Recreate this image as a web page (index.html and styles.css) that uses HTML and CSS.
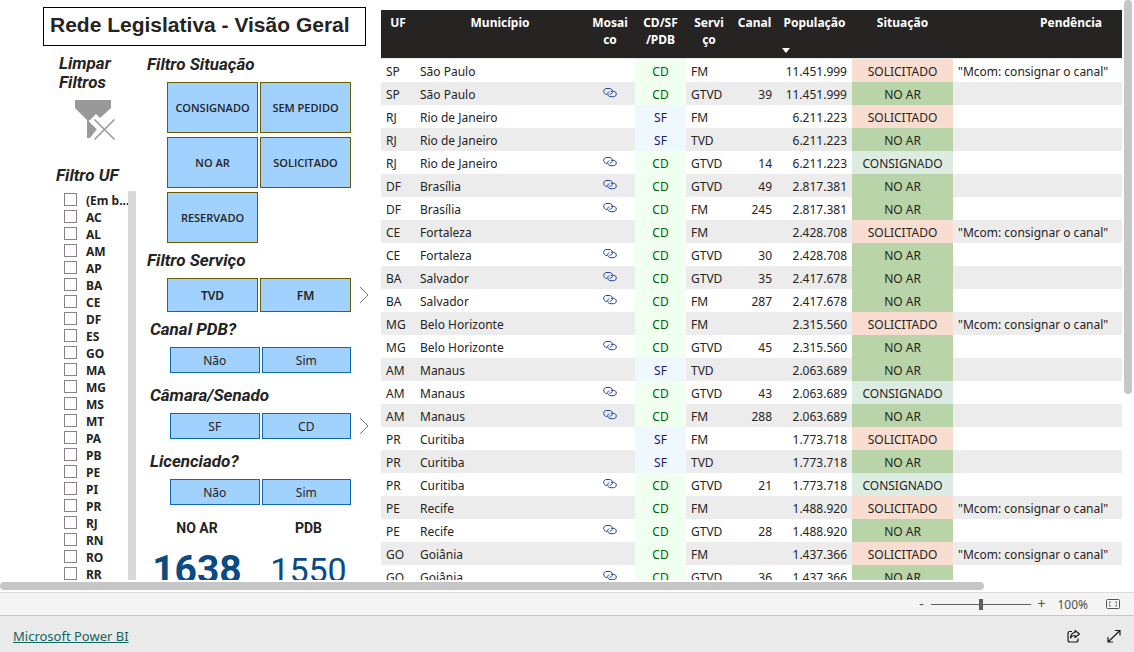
FILE: index.html
```html
<!DOCTYPE html>
<html lang="pt-BR">
<head>
<meta charset="utf-8">
<title>Rede Legislativa - Visão Geral</title>
<link rel="stylesheet" href="styles.css">
</head>
<body>
<svg class="symbols" aria-hidden="true">
  <symbol id="link" viewBox="0 0 14 11">
    <path d="M4 7.500C1.500 7.500 .7 5.500 .7 4.300C.7 2.500 2 1.500 4 1.500H6C8.500 1.500 9.500 3 9.500 4.500C9.500 6.500 8 7.200 6.500 7.200" />
    <path d="M8 4.300H10.500C14.200 4.300 14.200 9.700 10.500 9.700H8C5 9.700 4.500 7.500 4.700 6.500C5 5 6 4.700 6.500 4.700" />
  </symbol>
  <symbol id="chevron" viewBox="0 0 10 18"><path d="M1 1l8 8-8 8" /></symbol>
</svg>
<div class="app">
  <main class="viewport">
    <div class="report">
      <aside class="sidebar">
        <h1 class="title">Rede Legislativa - Visão Geral</h1>
        <div class="panels">
          <section class="uf-panel">
            <h2 class="heading clear-heading">Limpar Filtros</h2>
            <button class="clear" aria-label="Limpar Filtros">
              <svg width="41" height="41" viewBox="0 0 41 41"><path fill="#999" d="M0 0H36V8L25 18L21 14L14 21L22 29L15 38H12V20L0 8z" /><path fill="none" stroke="#fff" stroke-width="1.500" d="M14 20.500L23 29.500" /><path fill="none" stroke="#999" stroke-width="1.600" d="M19.500 19.500l20 20M39.500 19.500L19.500 39.500" /></svg>
            </button>
            <h2 class="heading uf-heading">Filtro UF</h2>
            <div class="uf-box">
              <div class="uf-list">
                <label><input type="checkbox"><span>(Em b...</span></label>
                <label><input type="checkbox"><span>AC</span></label>
                <label><input type="checkbox"><span>AL</span></label>
                <label><input type="checkbox"><span>AM</span></label>
                <label><input type="checkbox"><span>AP</span></label>
                <label><input type="checkbox"><span>BA</span></label>
                <label><input type="checkbox"><span>CE</span></label>
                <label><input type="checkbox"><span>DF</span></label>
                <label><input type="checkbox"><span>ES</span></label>
                <label><input type="checkbox"><span>GO</span></label>
                <label><input type="checkbox"><span>MA</span></label>
                <label><input type="checkbox"><span>MG</span></label>
                <label><input type="checkbox"><span>MS</span></label>
                <label><input type="checkbox"><span>MT</span></label>
                <label><input type="checkbox"><span>PA</span></label>
                <label><input type="checkbox"><span>PB</span></label>
                <label><input type="checkbox"><span>PE</span></label>
                <label><input type="checkbox"><span>PI</span></label>
                <label><input type="checkbox"><span>PR</span></label>
                <label><input type="checkbox"><span>RJ</span></label>
                <label><input type="checkbox"><span>RN</span></label>
                <label><input type="checkbox"><span>RO</span></label>
                <label><input type="checkbox"><span>RR</span></label>
              </div>
              <div class="uf-scroll"></div>
            </div>
          </section>
          <div class="filters">
            <section class="group">
              <h2 class="heading">Filtro Situação</h2>
              <div class="tiles tall">
                <button>CONSIGNADO</button><button>SEM PEDIDO</button>
                <button>NO AR</button><button>SOLICITADO</button>
                <button>RESERVADO</button>
              </div>
            </section>
            <section class="group">
              <h2 class="heading">Filtro Serviço</h2>
              <div class="slicer">
                <div class="tiles mid"><button>TVD</button><button>FM</button></div>
                <button class="next" aria-label="Próximo"><svg width="10" height="18"><use href="#chevron" /></svg></button>
              </div>
            </section>
            <section class="group inset">
              <h2 class="heading">Canal PDB?</h2>
              <div class="tiles small"><button>Não</button><button>Sim</button></div>
            </section>
            <section class="group inset spaced">
              <h2 class="heading">Câmara/Senado</h2>
              <div class="slicer">
                <div class="tiles small"><button>SF</button><button>CD</button></div>
                <button class="next" aria-label="Próximo"><svg width="10" height="18"><use href="#chevron" /></svg></button>
              </div>
            </section>
            <section class="group inset spaced">
              <h2 class="heading">Licenciado?</h2>
              <div class="tiles small"><button>Não</button><button>Sim</button></div>
            </section>
            <div class="cards">
              <div class="card strong"><h3>NO AR</h3><p>1638</p></div>
              <div class="card"><h3>PDB</h3><p>1550</p></div>
            </div>
          </div>
        </div>
      </aside>
      <div class="grid">
        <table>
          <colgroup><col class="w-uf"><col><col class="w-mos"><col class="w-org"><col class="w-ser"><col class="w-can"><col class="w-pop"><col class="w-sit"><col class="w-pen"></colgroup>
          <thead>
            <tr><th>UF</th><th>Município</th><th>Mosai<br>co</th><th>CD/SF<br>/PDB</th><th>Servi<br>ço</th><th>Canal</th><th class="sorted">População</th><th>Situação</th><th class="last">Pendência</th></tr>
          </thead>
          <tbody>
            <tr><td>SP</td><td>São Paulo</td><td></td><td class="cd">CD</td><td>FM</td><td class="n"></td><td class="n">11.451.999</td><td class="sol">SOLICITADO</td><td>"Mcom: consignar o canal"</td></tr>
            <tr><td>SP</td><td>São Paulo</td><td class="m"><a href="#" aria-label="Mosaico"><svg width="14" height="11"><use href="#link" /></svg></a></td><td class="cd">CD</td><td>GTVD</td><td class="n">39</td><td class="n">11.451.999</td><td class="air">NO AR</td><td></td></tr>
            <tr><td>RJ</td><td>Rio de Janeiro</td><td></td><td class="sf">SF</td><td>FM</td><td class="n"></td><td class="n">6.211.223</td><td class="sol">SOLICITADO</td><td></td></tr>
            <tr><td>RJ</td><td>Rio de Janeiro</td><td></td><td class="sf">SF</td><td>TVD</td><td class="n"></td><td class="n">6.211.223</td><td class="air">NO AR</td><td></td></tr>
            <tr><td>RJ</td><td>Rio de Janeiro</td><td class="m"><a href="#" aria-label="Mosaico"><svg width="14" height="11"><use href="#link" /></svg></a></td><td class="cd">CD</td><td>GTVD</td><td class="n">14</td><td class="n">6.211.223</td><td class="con">CONSIGNADO</td><td></td></tr>
            <tr><td>DF</td><td>Brasília</td><td class="m"><a href="#" aria-label="Mosaico"><svg width="14" height="11"><use href="#link" /></svg></a></td><td class="cd">CD</td><td>GTVD</td><td class="n">49</td><td class="n">2.817.381</td><td class="air">NO AR</td><td></td></tr>
            <tr><td>DF</td><td>Brasília</td><td class="m"><a href="#" aria-label="Mosaico"><svg width="14" height="11"><use href="#link" /></svg></a></td><td class="cd">CD</td><td>FM</td><td class="n">245</td><td class="n">2.817.381</td><td class="air">NO AR</td><td></td></tr>
            <tr><td>CE</td><td>Fortaleza</td><td></td><td class="cd">CD</td><td>FM</td><td class="n"></td><td class="n">2.428.708</td><td class="sol">SOLICITADO</td><td>"Mcom: consignar o canal"</td></tr>
            <tr><td>CE</td><td>Fortaleza</td><td class="m"><a href="#" aria-label="Mosaico"><svg width="14" height="11"><use href="#link" /></svg></a></td><td class="cd">CD</td><td>GTVD</td><td class="n">30</td><td class="n">2.428.708</td><td class="air">NO AR</td><td></td></tr>
            <tr><td>BA</td><td>Salvador</td><td class="m"><a href="#" aria-label="Mosaico"><svg width="14" height="11"><use href="#link" /></svg></a></td><td class="cd">CD</td><td>GTVD</td><td class="n">35</td><td class="n">2.417.678</td><td class="air">NO AR</td><td></td></tr>
            <tr><td>BA</td><td>Salvador</td><td class="m"><a href="#" aria-label="Mosaico"><svg width="14" height="11"><use href="#link" /></svg></a></td><td class="cd">CD</td><td>FM</td><td class="n">287</td><td class="n">2.417.678</td><td class="air">NO AR</td><td></td></tr>
            <tr><td>MG</td><td>Belo Horizonte</td><td></td><td class="cd">CD</td><td>FM</td><td class="n"></td><td class="n">2.315.560</td><td class="sol">SOLICITADO</td><td>"Mcom: consignar o canal"</td></tr>
            <tr><td>MG</td><td>Belo Horizonte</td><td class="m"><a href="#" aria-label="Mosaico"><svg width="14" height="11"><use href="#link" /></svg></a></td><td class="cd">CD</td><td>GTVD</td><td class="n">45</td><td class="n">2.315.560</td><td class="air">NO AR</td><td></td></tr>
            <tr><td>AM</td><td>Manaus</td><td></td><td class="sf">SF</td><td>TVD</td><td class="n"></td><td class="n">2.063.689</td><td class="air">NO AR</td><td></td></tr>
            <tr><td>AM</td><td>Manaus</td><td class="m"><a href="#" aria-label="Mosaico"><svg width="14" height="11"><use href="#link" /></svg></a></td><td class="cd">CD</td><td>GTVD</td><td class="n">43</td><td class="n">2.063.689</td><td class="con">CONSIGNADO</td><td></td></tr>
            <tr><td>AM</td><td>Manaus</td><td class="m"><a href="#" aria-label="Mosaico"><svg width="14" height="11"><use href="#link" /></svg></a></td><td class="cd">CD</td><td>FM</td><td class="n">288</td><td class="n">2.063.689</td><td class="air">NO AR</td><td></td></tr>
            <tr><td>PR</td><td>Curitiba</td><td></td><td class="sf">SF</td><td>FM</td><td class="n"></td><td class="n">1.773.718</td><td class="sol">SOLICITADO</td><td></td></tr>
            <tr><td>PR</td><td>Curitiba</td><td></td><td class="sf">SF</td><td>TVD</td><td class="n"></td><td class="n">1.773.718</td><td class="air">NO AR</td><td></td></tr>
            <tr><td>PR</td><td>Curitiba</td><td class="m"><a href="#" aria-label="Mosaico"><svg width="14" height="11"><use href="#link" /></svg></a></td><td class="cd">CD</td><td>GTVD</td><td class="n">21</td><td class="n">1.773.718</td><td class="con">CONSIGNADO</td><td></td></tr>
            <tr><td>PE</td><td>Recife</td><td></td><td class="cd">CD</td><td>FM</td><td class="n"></td><td class="n">1.488.920</td><td class="sol">SOLICITADO</td><td>"Mcom: consignar o canal"</td></tr>
            <tr><td>PE</td><td>Recife</td><td class="m"><a href="#" aria-label="Mosaico"><svg width="14" height="11"><use href="#link" /></svg></a></td><td class="cd">CD</td><td>GTVD</td><td class="n">28</td><td class="n">1.488.920</td><td class="air">NO AR</td><td></td></tr>
            <tr><td>GO</td><td>Goiânia</td><td></td><td class="cd">CD</td><td>FM</td><td class="n"></td><td class="n">1.437.366</td><td class="sol">SOLICITADO</td><td>"Mcom: consignar o canal"</td></tr>
            <tr><td>GO</td><td>Goiânia</td><td class="m"><a href="#" aria-label="Mosaico"><svg width="14" height="11"><use href="#link" /></svg></a></td><td class="cd">CD</td><td>GTVD</td><td class="n">36</td><td class="n">1.437.366</td><td class="air">NO AR</td><td></td></tr>
          </tbody>
        </table>
      </div>
    </div>
    <div class="v-scroll"><div class="v-thumb"></div></div>
  </main>
  <div class="h-scroll"><div class="h-thumb"></div></div>
  <div class="zoombar">
    <button class="step" aria-label="Reduzir">-</button>
    <input type="range" min="0" max="200" value="100" aria-label="Zoom">
    <button class="step plus" aria-label="Ampliar">+</button>
    <span class="percent">100%</span>
    <button class="icon" aria-label="Ajustar à página"><svg width="14" height="12" viewBox="0 0 14 12" fill="none" stroke="#555"><rect x=".5" y="1.500" width="13" height="9" rx="1" /><path d="M3.500 5.500V4H5M9 4h1.500v1.500M3.500 6.500V8H5M9 8h1.500V6.500" stroke-width=".8" /></svg></button>
  </div>
  <footer class="footer">
    <a href="#">Microsoft Power BI</a>
    <div class="actions">
      <button class="icon" aria-label="Compartilhar"><svg width="14" height="14" viewBox="0 0 14 14" fill="none" stroke="#1b1b1b" stroke-width="1.200" stroke-linejoin="round"><path d="M5 2.500H3Q1 2.500 1 4.500V11Q1 13 3 13H9Q11 13 11 11V9.500" /><path d="M8 1.500L12.500 5 8 8.500V6.500Q5 6.300 3.500 9Q3.800 4 8 3.500z" /></svg></button>
      <button class="icon" aria-label="Tela inteira"><svg width="14" height="14" viewBox="0 0 14 14" fill="none" stroke="#1b1b1b" stroke-width="1.200"><path d="M8 1.500h5v5M6 13H1V8M1 13L13 1.500" /></svg></button>
    </div>
  </footer>
</div>
</body>
</html>
```
FILE: styles.css
```css
* { box-sizing: border-box; }
body {
  margin: 0;
  font-family: "Noto Sans", "Open Sans", sans-serif;
  font-size: 12px;
  color: #252423;
  background: #fff;
}
h1, h2, h3, p { margin: 0; }
button {
  font: inherit;
  color: inherit;
  padding: 0;
  border: 0;
  background: none;
}
svg { display: block; }
.symbols { width: 0; height: 0; position: absolute; }

.app { display: flex; flex-direction: column; height: 100vh; }
.viewport { flex: 1; min-height: 0; display: flex; overflow: hidden; }
.report {
  flex: 1;
  min-width: 0;
  display: flex;
  gap: 10px;
  padding: 7px 2px 0 43px;
}

.sidebar { flex: 0 0 328px; }
.title {
  margin-right: 5px;
  height: 39px;
  padding: 0 6px;
  border: 1px solid #000;
  font: bold 21px/34px "Liberation Sans", Arial, sans-serif;
  white-space: nowrap;
}
.panels { display: flex; padding-top: 8px; }
.heading {
  font: italic bold 17px/20px Roboto, sans-serif;
  white-space: nowrap;
}
.uf-panel { flex: 0 0 104px; }
.clear-heading { padding-left: 16px; line-height: 19px; width: 80px; white-space: normal; }
.clear { margin: 8px 0 0 32px; display: block; }
.uf-heading { margin-top: 24px; padding-left: 13px; }
.uf-box { display: flex; width: 93px; margin-top: 6px; }
.uf-list { flex: 1; min-width: 0; padding-left: 21px; }
.uf-list label {
  display: flex;
  align-items: center;
  gap: 9px;
  height: 17px;
  font-weight: bold;
  white-space: nowrap;
}
.uf-list span { padding-top: 1px; }
.uf-list input {
  appearance: none;
  flex: none;
  width: 13px;
  height: 13px;
  margin: 0;
  border: 1px solid #8a8188;
  background: #fff;
}
.uf-scroll { flex: 0 0 8px; background: #d9d9d9; }

.filters { flex: 1; display: flex; flex-direction: column; gap: 7px; }
.inset .heading { padding-left: 3px; }
.spaced { margin-top: 5px; }
.tiles {
  display: grid;
  grid-template-columns: 1fr 1fr;
  gap: 4px 2px;
  width: 184px;
  margin: 8px 0 0 20px;
}
.tiles button {
  height: 26px;
  background: #a0d1ff;
  border: 1px solid #0c68b8;
}
.inset .tiles { width: 181px; margin-left: 23px; }
.tiles.tall button, .tiles.mid button { border-color: #6b5b00; font-weight: 600; }
.tiles.tall button { height: 51px; font-family: "Open Sans", sans-serif; font-size: 11px; }
.tiles.mid button { height: 34px; }
.slicer { display: flex; align-items: flex-end; gap: 8px; }
.next { height: 26px; display: flex; align-items: center; }
.mid + .next { height: 34px; }
.next svg, .m svg { fill: none; stroke: #777; }
.cards { display: flex; margin-top: 6px; }
.card { width: 100px; text-align: center; }
.card + .card { width: 123px; }
.card h3 { font: bold 14px/20px Roboto, sans-serif; }
.card p { font: 34px/40px Roboto, sans-serif; color: #0b4a82; margin-top: 12px; }
.card.strong p { font-size: 39px; font-weight: bold; }

.grid { flex: 1; min-width: 0; padding-top: 3px; }
table {
  width: 100%;
  table-layout: fixed;
  border-collapse: collapse;
}
.w-uf { width: 34px; }
.w-mos { width: 50px; }
.w-org { width: 51px; }
.w-ser { width: 46px; }
.w-can { width: 45px; }
.w-pop { width: 75px; }
.w-sit { width: 101px; }
.w-pen { width: 169px; }
th {
  height: 48px;
  padding: 4px 0 0;
  vertical-align: top;
  color: #fff;
  background: #252423;
  line-height: 17px;
}
thead { border-bottom: 1px solid #e6e6e6; }
.last { text-align: right; padding-right: 20px; }
.sorted::after {
  content: "";
  display: block;
  width: 0;
  margin: 17px 0 0 5px;
  border: 4px solid transparent;
  border-top: 5px solid #fff;
  border-bottom: 0;
}
td { height: 23px; padding: 3px 5px 0; line-height: 20px; white-space: nowrap; }
tbody tr:nth-child(even) { background: #ececec; }
.n { text-align: right; }
.m { padding: 0 5px 2px; }
.m svg { margin: 0 auto; stroke: #24449c; stroke-width: 1; }
.cd, .sf, .sol, .air, .con { text-align: center; }
.cd { background: #f0fff0; color: #006400; }
.sf { background: #f0f8ff; color: #191970; }
.sol { background: #f9ddd0; }
.air { background: #b8d4a8; }
.con { background: #dcece3; }

.v-scroll { flex: 0 0 10px; }
.v-thumb { width: 8px; height: 68%; background: #c6c6c6; border-radius: 4px; }
.h-scroll { padding: 2px 150px 2px 0; }
.h-thumb { height: 8px; background: #c6c6c6; border-radius: 4px; }
.zoombar {
  display: flex;
  align-items: center;
  justify-content: flex-end;
  height: 24px;
  padding-right: 14px;
  border-top: 1px solid #dcdcdc;
  border-bottom: 1px solid #c6c6c6;
  background: #f4f4f4;
  color: #505050;
}
.step { width: 12px; font-size: 14px; line-height: 20px; }
.zoombar input {
  appearance: none;
  width: 100px;
  height: 11px;
  margin: 0 4px;
  background: linear-gradient(#606060, #606060) center / 100% 1px no-repeat;
}
.zoombar input::-webkit-slider-thumb {
  appearance: none;
  width: 4px;
  height: 11px;
  background: #605e5c;
}
.percent { margin: 0 18px 0 10px; }
.footer {
  display: flex;
  align-items: center;
  justify-content: space-between;
  height: 36px;
  padding: 3px 13px 0;
  background: #eaeaea;
}
.footer a { color: #12655c; font-size: 13px; }
.actions { display: flex; gap: 26px; }
```
